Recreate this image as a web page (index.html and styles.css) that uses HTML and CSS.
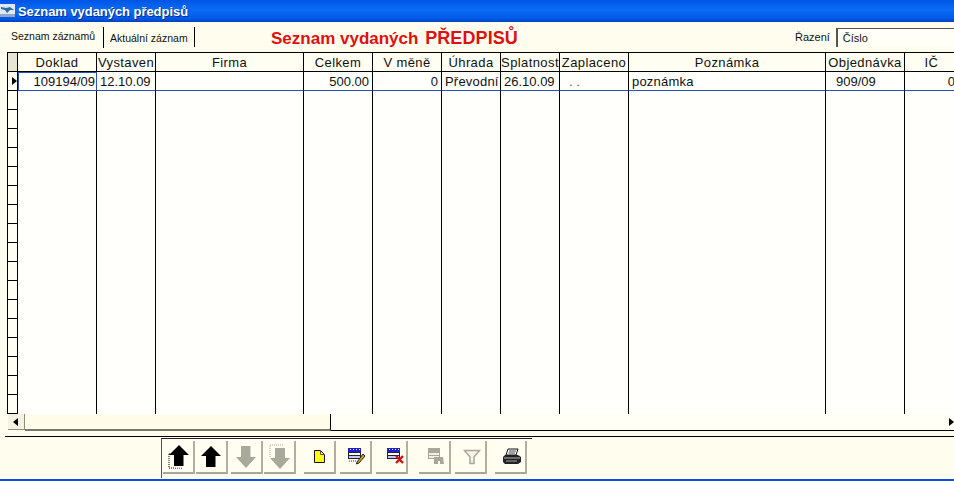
FILE: index.html
```html
<!DOCTYPE html>
<html lang="cs">
<head>
  <meta charset="UTF-8" />
  <title>Seznam vydaných předpisů</title>
  <link rel="stylesheet" href="styles.css">
</head>
<body>
  <div class="window">
    <div class="titlebar">
      <svg class="appicon" width="16" height="16" viewBox="0 0 16 16">
        <rect x="0" y="1" width="15" height="13" fill="#dfe8f4"/>
        <path d="M1 4 L6 5 L10 4 L14 7 L10 7 L7 10 L5 7 L1 6 Z" fill="#2a6f9e"/>
        <path d="M0 11 H15 V14 H0 Z" fill="#8fa9c4"/>
      </svg>
      <span>Seznam vydaných předpisů</span>
    </div>

    <div class="topbar">
      <div class="tabs">
        <span class="tab active">Seznam záznamů</span>
        <span class="tab">Aktuální záznam</span>
      </div>
      <h1><b>Seznam vydaných</b> <span class="caps">PŘEDPISŮ</span></h1>
      <label class="sort">Řazení <span class="sortbox">Číslo</span></label>
    </div>

    <div class="gridwrap">
      <table class="grid">
        <thead>
          <tr>
            <th class="gutter"></th><th>Doklad</th><th>Vystaven</th><th>Firma</th><th>Celkem</th><th>V měně</th>
            <th>Úhrada</th><th>Splatnost</th><th>Zaplaceno</th><th>Poznámka</th><th>Objednávka</th><th>IČ</th>
          </tr>
        </thead>
        <tbody>
          <tr class="current">
            <td class="gutter"><i class="pointer"></i></td>
            <td class="num focus">109194/09</td><td>12.10.09</td><td></td><td class="num">500.00</td><td class="num">0</td>
            <td class="wide">Převodní</td><td>26.10.09</td><td class="date-empty">. .</td><td class="wide">poznámka</td><td class="order">909/09</td><td class="num">0</td>
          </tr>
          <tr class="filler">
            <td class="gutter"></td><td></td><td></td><td></td><td></td><td></td>
            <td></td><td></td><td></td><td></td><td></td><td></td>
          </tr>
        </tbody>
      </table>
    </div>

    <div class="hscroll">
      <div class="sbtn"><i class="tri-left"></i></div>
      <div class="thumb"></div>
      <div class="track"><i class="tri-right"></i></div>
    </div>
    <div class="rule"></div>

    <div class="toolbar">
      <div class="tools">
        <button class="btn">
          <svg width="24" height="28" viewBox="0 0 24 28">
            <path d="M3 11 H6 M3 11 V25 H16" fill="none" stroke="#000" stroke-dasharray="1 1"/>
            <path d="M13 2 L23 12 H18 V23 H8 V12 H3 Z" fill="#000"/>
            <path d="M18 12 V24 H8" fill="none" stroke="#fff"/>
          </svg>
        </button>
        <button class="btn">
          <svg width="24" height="28" viewBox="0 0 24 28">
            <path d="M12 3 L22 13 H17 V24 H7 V13 H2 Z" fill="#000"/>
            <path d="M17 13 V24" stroke="#fff"/>
          </svg>
        </button>
        <button class="btn gap-2">
          <svg width="24" height="28" viewBox="0 0 24 28">
            <path d="M7 3 H17 V14 H22 L12 25 L2 14 H7 Z" fill="#a9a999"/>
            <path d="M17 3 V14" stroke="#fff"/>
          </svg>
        </button>
        <button class="btn">
          <svg width="24" height="28" viewBox="0 0 24 28">
            <path d="M3 14 V2 H16" fill="none" stroke="#a9a999" stroke-dasharray="1 1"/>
            <path d="M8 5 H18 V15 H23 L13 26 L3 15 H8 Z" fill="#a9a999"/>
          </svg>
        </button>
        <button class="btn gap-7">
          <svg width="13" height="15" viewBox="0 0 13 15">
            <path d="M1.5 1.5 H7.5 L11.5 5.5 V13.5 H1.5 Z" fill="#ffff10" stroke="#111"/>
            <path d="M7.5 1.5 V5.5 H11.5" fill="none" stroke="#555"/>
          </svg>
        </button>
        <button class="btn gap-3 nudge">
          <svg width="20" height="20" viewBox="0 0 20 20">
            <rect x="1" y="1" width="13" height="4" fill="#2020c8"/>
            <path d="M3 2.5 H4 M6 2.5 H7 M9 2.5 H10 M12 2.5 H13" stroke="#fff"/>
            <rect x="1.5" y="5.5" width="12" height="3" fill="#fff" stroke="#223"/>
            <rect x="1.5" y="8.5" width="12" height="3" fill="#c8c8f0" stroke="#223"/>
            <path d="M2 14 H9" stroke="#333" stroke-dasharray="1 1"/>
            <path d="M10 15 L16 7 L18 9 L12 16 L9.5 17 Z" fill="#c8a820" stroke="#222"/>
          </svg>
        </button>
        <button class="btn gap-3 nudge-wide">
          <svg width="20" height="20" viewBox="0 0 20 20">
            <rect x="1" y="1" width="13" height="4" fill="#2020c8"/>
            <path d="M3 2.5 H4 M6 2.5 H7 M9 2.5 H10 M12 2.5 H13" stroke="#fff"/>
            <rect x="1.5" y="5.5" width="12" height="3" fill="#fff" stroke="#223"/>
            <rect x="1.5" y="8.5" width="12" height="3" fill="#c8c8f0" stroke="#223"/>
            <path d="M10 9 L17 16 M17 9 L10 16" stroke="#d81010" stroke-width="2.4"/>
          </svg>
        </button>
        <button class="btn gap-10 nudge">
          <svg width="20" height="20" viewBox="0 0 20 20">
            <rect x="2" y="1" width="12" height="4" fill="#a8a898"/>
            <rect x="2.5" y="5.5" width="11" height="3" fill="#f0f0e4" stroke="#a8a898"/>
            <rect x="2.5" y="8.5" width="11" height="3" fill="#f0f0e4" stroke="#a8a898"/>
            <path d="M8 10 H17 L18 17 H14 V14 H12 V17 H8 Z" fill="#a8a898"/>
          </svg>
        </button>
        <button class="btn gap-3 nudge">
          <svg width="20" height="20" viewBox="0 0 20 20">
            <path d="M2.5 3.5 H17.5 L12 10 V16.5 H8 V10 Z" fill="#f4f4e8" stroke="#a8a898" stroke-width="1.5"/>
          </svg>
        </button>
        <button class="btn gap-7 nudge">
          <svg width="20" height="20" viewBox="0 0 20 20">
            <path d="M6 2 H16 L14 8 H4 Z" fill="#fff" stroke="#111"/>
            <path d="M7 4 H14 M6.5 6 H13" stroke="#444"/>
            <path d="M3 8 H16 L19 10 V15 L16 17 H3 L1 15 V10 Z" fill="#222"/>
            <path d="M2 11 H18" stroke="#bbb"/>
            <path d="M4 14 H15" stroke="#666" stroke-width="2"/>
          </svg>
        </button>
      </div>
    </div>
  </div>
</body>
</html>
```

FILE: styles.css
```css
* {
  box-sizing: border-box;
}
body {
  margin: 0;
  font-family: "Liberation Sans", Arial, sans-serif;
  color: #111;
  background: #fffeee;
}
.window {
  display: flex;
  flex-direction: column;
  height: 481px;
  overflow: hidden;
  border-bottom: 2px solid #0a50dc;
}

/* title bar */
.titlebar {
  display: flex;
  align-items: center;
  gap: 2px;
  flex: none;
  height: 22px;
  color: #fff;
  font-size: 13px;
  font-weight: bold;
  letter-spacing: -.05px;
  text-shadow: 1px 1px 0 #0a2c90;
  background: linear-gradient(#0054e4, #0a6cf4 45%, #0058e6 85%, #0040c0);
}
.appicon {
  flex: none;
}

/* tabs, heading and sort box */
.topbar {
  display: flex;
  align-items: center;
  flex: none;
  height: 30px;
  padding-left: 11px;
}
.tabs {
  display: flex;
  flex: none;
  width: 260px;
  font-size: 10.5px;
}
.tab {
  width: 91px;
  height: 20px;
  padding: 5px 0 0 6px;
  border-right: 1px solid #000;
}
.tab.active {
  width: 93px;
  height: 21px;
  padding: 3px 0 0 0;
}
h1 {
  flex: none;
  width: 524px;
  margin: 2px 0 0;
  color: #e01010;
  font-size: 17px;
  font-weight: bold;
}
.caps {
  margin-left: 2px;
  font-size: 18px;
  letter-spacing: .1px;
}
.sort {
  display: flex;
  align-items: center;
  flex: none;
  gap: 6px;
  font-size: 11px;
}
.sortbox {
  width: 130px;
  height: 19px;
  padding: 3px 5px;
  background: #fffff8;
  border-left: 2px solid #555;
  border-top: 1px solid #555;
}

/* records grid */
.gridwrap {
  flex: none;
  height: 362px;
  margin-left: 7px;
  overflow: hidden;
}
.grid {
  table-layout: fixed;
  width: 951px;
  border-collapse: separate;
  border-spacing: 0;
  border-left: 1px solid #000;
  font-size: 13px;
  background: #fffffb;
}
.grid th, .grid td {
  overflow: hidden;
  padding: 0 3px;
  white-space: nowrap;
  border-right: 1px solid #000;
}
.grid th {
  height: 20px;
  padding: 0;
  font-weight: normal;
  letter-spacing: .4px;
  background: #fffef2;
  border-top: 1px solid #000;
  border-bottom: 1px solid #000;
}
.grid th:nth-child(1) { width: 10px; background: #e6e4d2; }
.grid th:nth-child(2) { width: 79px; }
.grid th:nth-child(3) { width: 59px; }
.grid th:nth-child(4) { width: 148px; }
.grid th:nth-child(5) { width: 69px; }
.grid th:nth-child(6) { width: 69px; }
.grid th:nth-child(7) { width: 59px; }
.grid th:nth-child(8) { width: 59px; }
.grid th:nth-child(9) { width: 69px; }
.grid th:nth-child(10) { width: 197px; }
.grid th:nth-child(11) { width: 79px; }
.grid th:nth-child(12) { width: 54px; }

.current td {
  height: 19px;
  border-bottom: 1px solid #2a50b0;
}
.grid td.gutter {
  position: relative;
  padding: 0;
  background: #fffef2;
  border-bottom: 1px solid #000;
}
.pointer {
  position: absolute;
  left: 4px;
  top: 5px;
  border-left: 5px solid #000;
  border-top: 4px solid transparent;
  border-bottom: 4px solid transparent;
}
.num {
  text-align: right;
}
.wide {
  letter-spacing: .2px;
}
.grid td.focus {
  padding-right: 1px;
  outline: 1px solid #2a50b0;
  outline-offset: -1px;
}
.grid td.date-empty {
  padding-left: 9px;
  color: #555;
}
.grid td.order {
  padding-left: 10px;
}
.filler td {
  height: 342px;
}
.grid .filler td.gutter {
  border-bottom: 0;
  background: repeating-linear-gradient(#fffef2 0, #fffef2 18px, #000 18px, #000 19px);
}

/* horizontal scrollbar */
.hscroll {
  display: flex;
  flex: none;
  height: 17px;
  margin-left: 8px;
}
.sbtn {
  display: flex;
  align-items: center;
  padding-left: 5px;
  width: 17px;
  height: 16px;
  background: #f4f2e0;
  border-right: 1px solid #8c8c7c;
  border-bottom: 1px solid #8c8c7c;
}
.thumb {
  width: 306px;
  height: 17px;
  background: #fffcea;
  border-right: 1px solid #000;
  border-bottom: 2px solid #77776a;
}
.track {
  display: flex;
  align-items: center;
  justify-content: flex-end;
  flex: 1;
  background: #fffff6;
  border-bottom: 1px solid #000;
}
.tri-left {
  border-right: 5px solid #000;
  border-top: 4px solid transparent;
  border-bottom: 4px solid transparent;
}
.tri-right {
  border-left: 5px solid #000;
  border-top: 4px solid transparent;
  border-bottom: 4px solid transparent;
}
.rule {
  flex: none;
  height: 6px;
  margin-left: 5px;
  border-bottom: 1px solid #000;
}

/* command buttons */
.toolbar {
  flex: none;
  padding: 1px 0 0 161px;
}
.tools {
  display: flex;
  gap: 1px;
  width: 371px;
  height: 40px;
  padding: 2px 0 0 1px;
  border-top: 1px solid #222;
  border-left: 1px solid #555;
}
.btn {
  display: flex;
  align-items: center;
  justify-content: center;
  flex: none;
  width: 32px;
  height: 33px;
  padding: 0;
  background: #fffef0;
  border: 0;
  border-right: 2px solid #b0b0a0;
  border-bottom: 2px solid #a8a898;
}
.gap-2 { margin-left: 2px; }
.gap-3 { margin-left: 3px; }
.gap-7 { margin-left: 7px; }
.gap-10 { margin-left: 10px; }
.nudge { padding-left: 3px; }
.nudge-wide { padding-left: 9px; }
```
